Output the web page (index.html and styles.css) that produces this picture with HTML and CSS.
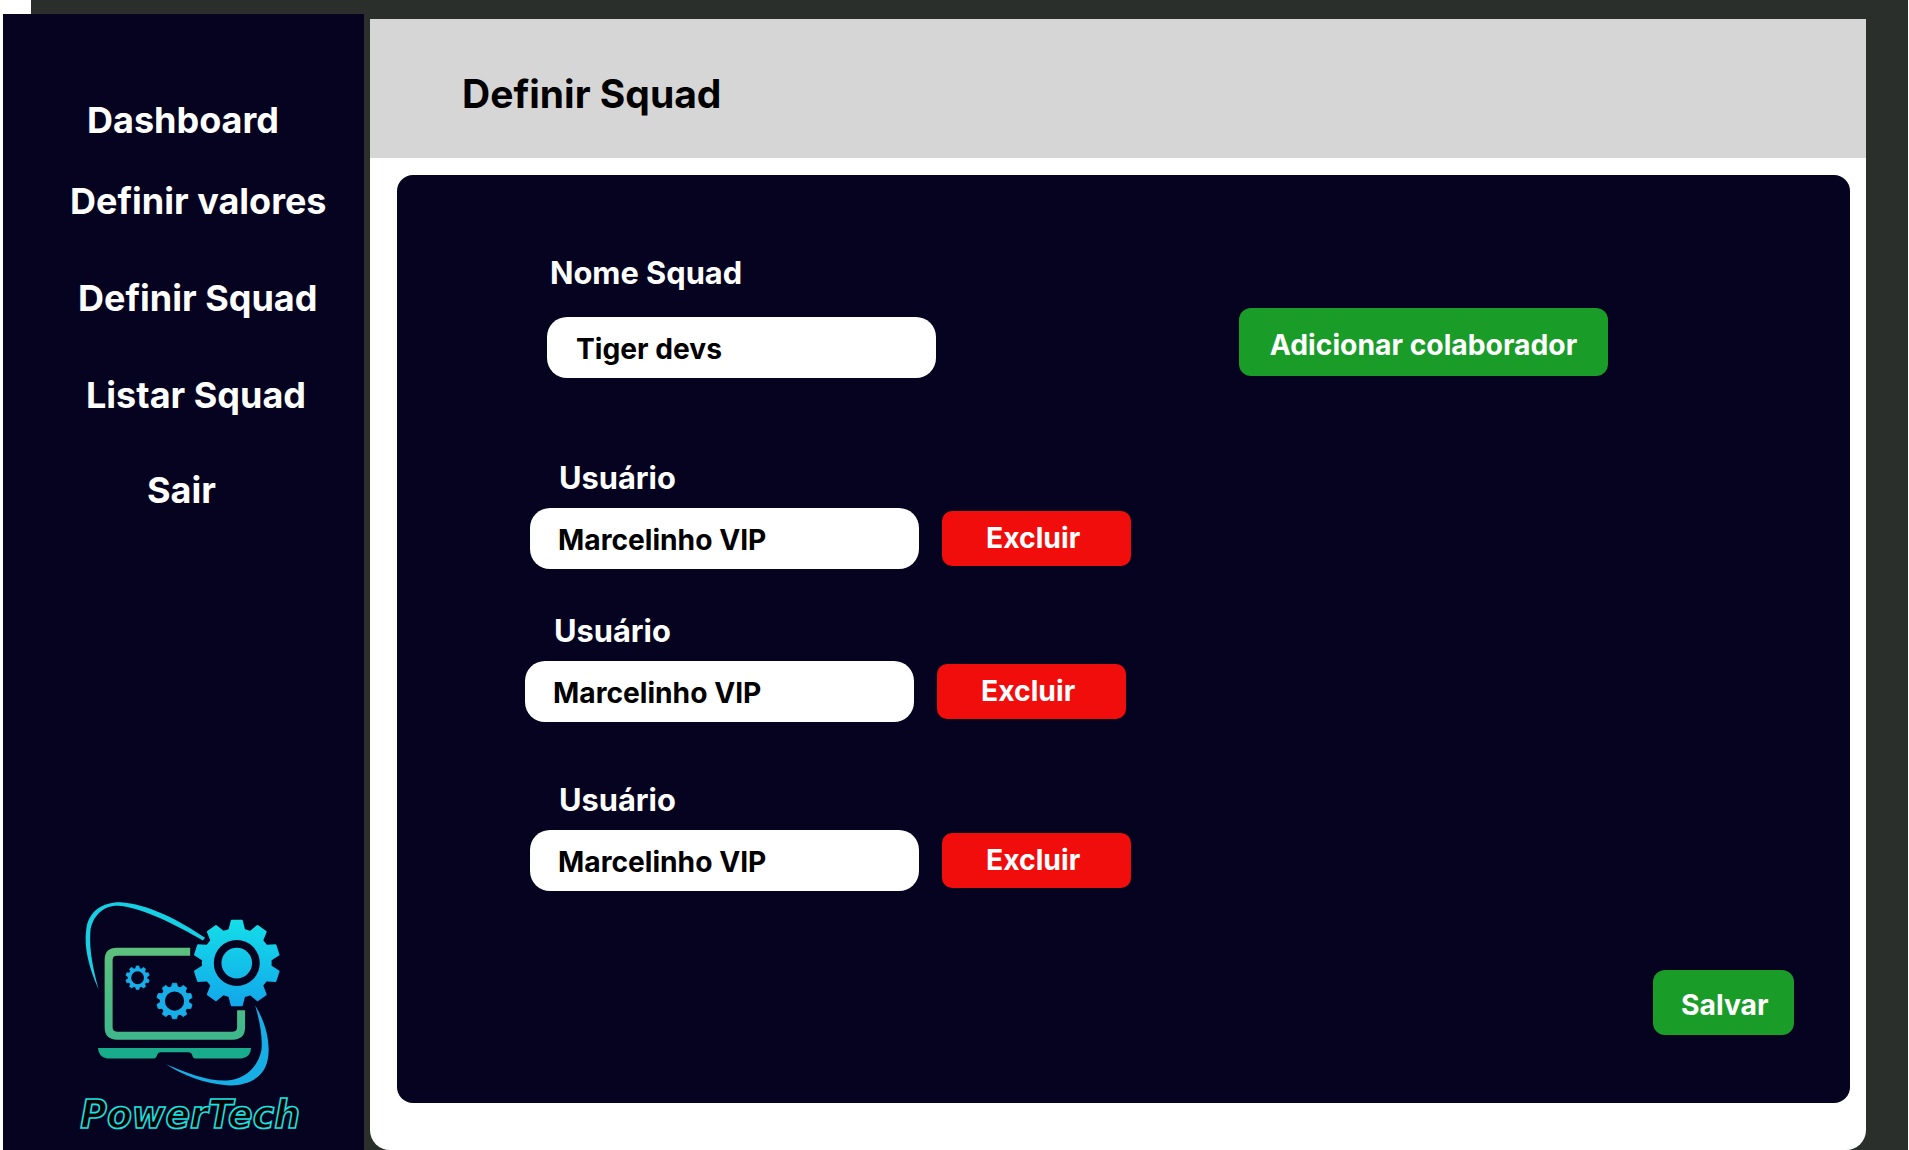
FILE: index.html
```html
<!DOCTYPE html>
<html lang="pt-BR">
<head>
<meta charset="utf-8">
<title>Definir Squad</title>
<link rel="stylesheet" href="styles.css">
</head>
<body>
<div class="corner"></div>
<div class="page">
  <aside class="sidebar">
    <nav class="nav">
      <a class="nav-item nav-dashboard">Dashboard</a>
      <a class="nav-item nav-valores">Definir valores</a>
      <a class="nav-item nav-squad">Definir Squad</a>
      <a class="nav-item nav-listar">Listar Squad</a>
      <a class="nav-item nav-sair">Sair</a>
    </nav>
    <svg class="logo" viewBox="230 110 700 735" aria-label="PowerTech">
      <defs>
        <linearGradient id="gearGrad" gradientUnits="userSpaceOnUse" x1="710" y1="175" x2="710" y2="440">
          <stop offset="0" stop-color="#14dfe8"/>
          <stop offset="1" stop-color="#12a6ea"/>
        </linearGradient>
        <linearGradient id="screenGrad" gradientUnits="userSpaceOnUse" x1="500" y1="262" x2="500" y2="540">
          <stop offset="0" stop-color="#5cc07c"/>
          <stop offset="1" stop-color="#3fb78c"/>
        </linearGradient>
        <polygon id="tooth" points="-24,-92 -15,-127 15,-127 24,-92" fill="currentColor" stroke="currentColor" stroke-width="6" stroke-linejoin="round"/>
        <g id="gear">
          <circle r="87" fill="none" stroke="currentColor" stroke-width="36"/>
          <use href="#tooth"/>
          <use href="#tooth" transform="rotate(36)"/>
          <use href="#tooth" transform="rotate(72)"/>
          <use href="#tooth" transform="rotate(108)"/>
          <use href="#tooth" transform="rotate(144)"/>
          <use href="#tooth" transform="rotate(180)"/>
          <use href="#tooth" transform="rotate(216)"/>
          <use href="#tooth" transform="rotate(252)"/>
          <use href="#tooth" transform="rotate(288)"/>
          <use href="#tooth" transform="rotate(324)"/>
        </g>
        <mask id="bigGear" maskUnits="userSpaceOnUse" x="560" y="160" width="300" height="300">
          <g color="#fff">
            <use href="#gear" transform="translate(710 308)"/>
            <circle cx="710" cy="308" r="46" fill="#fff"/>
          </g>
        </mask>
      </defs>
      <path fill="#16cfe2" d="M295 388C265 320 250 260 258 205C265 150 310 124 360 125C440 129 540 180 615 232L608 240C530 195 430 143 355 136C312 134 275 165 270 215C266 270 280 330 295 388Z"/>
      <path fill="#17aee6" d="M765 435C800 490 815 560 800 610C785 660 730 679 680 675C610 670 550 645 497 612C560 638 620 663 680 661C732 657 772 625 784 570C788 525 778 480 765 435Z"/>
      <path fill="none" stroke="url(#screenGrad)" stroke-width="24" d="M570 274H350Q325 274 325 299V500Q325 526 350 526H698Q723 526 723 500V450"/>
      <path fill="#18ab8c" d="M293 563H753Q752 590 725 595H585Q578 595 575 581Q572 576 565 576H482Q473 576 470 586Q468 595 460 595H320Q295 590 293 563Z"/>
      <rect x="560" y="160" width="300" height="300" fill="url(#gearGrad)" mask="url(#bigGear)"/>
      <use href="#gear" color="#18aee8" transform="translate(412 352) scale(0.28)"/>
      <use href="#gear" color="#18aee8" transform="translate(523 422) scale(0.42)"/>
      <text class="logo-text" x="240" y="617" transform="scale(1 1.3)" textLength="660" lengthAdjust="spacingAndGlyphs">PowerTech</text>
    </svg>
  </aside>
  <main class="main">
    <header class="header"><h1 class="title">Definir Squad</h1></header>
    <section class="card">
      <div class="squad-row">
        <div class="squad-field">
          <div class="label label-squad">Nome Squad</div>
          <div class="field field-squad">Tiger devs</div>
        </div>
        <a class="btn btn-green btn-add">Adicionar colaborador</a>
      </div>
      <div class="user user-a">
        <div class="label">Usuário</div>
        <div class="user-row"><div class="field">Marcelinho VIP</div><a class="btn btn-red">Excluir</a></div>
      </div>
      <div class="user user-b">
        <div class="label">Usuário</div>
        <div class="user-row"><div class="field">Marcelinho VIP</div><a class="btn btn-red">Excluir</a></div>
      </div>
      <div class="user user-c">
        <div class="label">Usuário</div>
        <div class="user-row"><div class="field">Marcelinho VIP</div><a class="btn btn-red">Excluir</a></div>
      </div>
      <div class="actions"><a class="btn btn-green btn-save">Salvar</a></div>
    </section>
  </main>
</div>
</body>
</html>
```

FILE: styles.css
```css
* { box-sizing: border-box; }
html, body { margin: 0; height: 1150px; overflow: hidden; background: #fff; }
body { font-family: Inter, "Liberation Sans", sans-serif; font-weight: 700; position: relative; }

.corner { position: absolute; top: 0; left: 0; width: 31px; height: 14px; background: #fff; z-index: 1; }

.page {
  display: flex;
  height: 1150px;
  margin: 0 1px 0 3px;
  padding-top: 14px;
  background: #2a2f2b;
}

.sidebar {
  width: 361px;
  flex: none;
  display: flex;
  flex-direction: column;
  background: #05031f;
  color: #fff;
}
.nav { display: flex; flex-direction: column; align-items: flex-start; padding-top: 84px; }
.nav-item { font-size: 36px; line-height: 44px; white-space: nowrap; }
.nav-dashboard { margin-left: 84px; }
.nav-valores { margin-left: 67px; margin-top: 37px; }
.nav-squad { margin-left: 75px; margin-top: 53px; }
.nav-listar { margin-left: 83px; margin-top: 53px; }
.nav-sair { margin-left: 144px; margin-top: 51px; }

.logo { width: 233px; height: 245px; margin: auto 0 8px 74px; display: block; }
.logo-text {
  font-family: "DejaVu Sans", sans-serif;
  font-style: italic;
  font-weight: 700;
  font-size: 92px;
  fill: #000;
  stroke: #1be0e0;
  stroke-width: 4px;
}

.main {
  width: 1496px;
  flex: none;
  margin: 5px 0 0 6px;
  background: #fff;
  border-radius: 0 0 20px 20px;
}
.header { height: 139px; background: #d6d6d6; display: flex; align-items: center; padding: 10px 0 0 92px; }
.title { margin: 0; font-size: 39px; line-height: 48px; font-weight: 700; color: #000; }

.card {
  height: 928px;
  margin: 17px 16px 0 27px;
  padding-top: 79px;
  border-radius: 16px;
  background: #05031f;
  color: #fff;
}

.label { font-size: 30.8px; line-height: 37px; }
.label-squad { margin-left: 3px; margin-bottom: 26px; }

.field {
  width: 389px;
  height: 61px;
  padding-left: 28px;
  border-radius: 20px;
  background: #fff;
  color: #000;
  font-size: 28.2px;
  line-height: 64px;
  white-space: nowrap;
}
.field-squad { padding-left: 29px; }

.squad-row { display: flex; align-items: flex-start; margin-left: 150px; }
.btn { display: block; color: #fff; white-space: nowrap; font-size: 28.3px; flex: none; }
.btn-green { background: #1a9c28; }
.btn-add {
  width: 369px;
  height: 68px;
  margin: 54px 0 0 303px;
  border-radius: 12px;
  line-height: 75px;
  text-align: center;
}

.user .label { margin-left: 29px; margin-bottom: 12px; }
.user-a { margin: 81px 0 0 133px; }
.user-b { margin: 43px 0 0 128px; }
.user-c { margin: 59px 0 0 133px; }
.user-row { display: flex; align-items: flex-start; }
.btn-red {
  width: 189px;
  height: 55px;
  margin: 3px 0 0 23px;
  padding-left: 44px;
  border-radius: 10px;
  background: #f20d0d;
  line-height: 54px;
}

.actions { display: flex; justify-content: flex-end; margin: 79px 56px 0 0; }
.btn-save { width: 141px; height: 65px; border-radius: 12px; line-height: 70px; padding-left: 28px; }
```
